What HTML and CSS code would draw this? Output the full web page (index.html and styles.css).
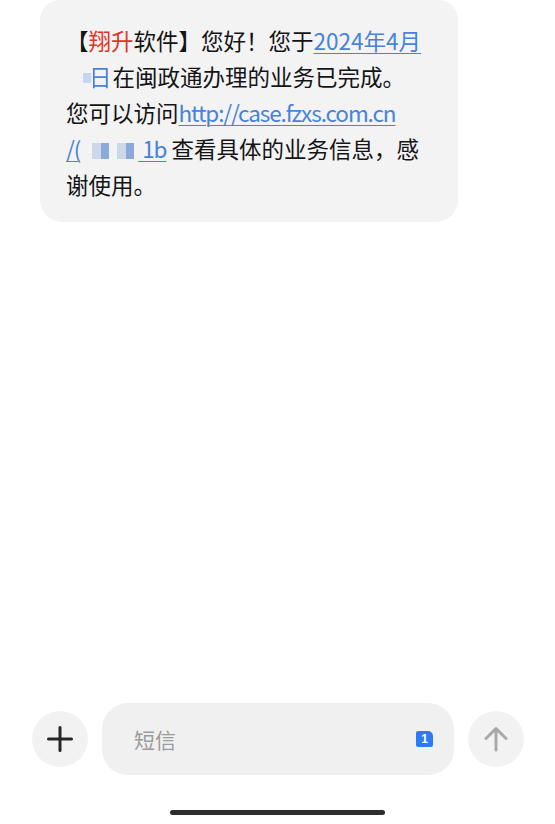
FILE: index.html
```html
<!DOCTYPE html>
<html lang="zh-CN">
<head>
  <meta charset="UTF-8" />
  <meta name="viewport" content="width=device-width, initial-scale=1.0"/>
  <title>短信</title>
  <link rel="stylesheet" href="styles.css">
</head>
<body>
  <div class="thread">
    <div class="bubble">
      <p class="msg">【<span class="brand">翔升</span>软件】您好！您于<a class="link" href="#">2024年4月</a><br><a class="link mosaic" href="#"><span class="blank"></span><span class="px px-a"></span><span class="blur">日</span></a>在闽政通办理的业务已完成。<br>您可以访问<a class="link latin" href="#">http://case.fzxs.com.cn</a><br><a class="link latin" href="#">/(<span class="px px-b first"></span><span class="px px-c"></span><span class="px px-b"></span><span class="px px-c last"></span> 1b</a> 查看具体的业务信息，感<br>谢使用。</p>
    </div>
  </div>

  <div class="composer">
    <div class="round-btn">
      <svg width="26" height="26" viewBox="0 0 26 26">
        <path d="M13 1.5v23M1.5 13h23" stroke="#262626" stroke-width="3" stroke-linecap="round" fill="none"/>
      </svg>
    </div>
    <div class="input-pill">
      <span class="placeholder">短信</span>
      <span class="sim">1</span>
    </div>
    <div class="round-btn">
      <svg width="24" height="26" viewBox="0 0 24 26">
        <path d="M12 24V3M2 12.5L12 2.5l10 10" stroke="#a9a9a9" stroke-width="3" stroke-linecap="round" stroke-linejoin="round" fill="none"/>
      </svg>
    </div>
  </div>

  <div class="home-bar"></div>
</body>
</html>
```

FILE: styles.css
```css
* {
  box-sizing: border-box;
}

body {
  margin: 0;
  height: 100vh;
  display: flex;
  flex-direction: column;
  background: #fff;
  font-family: "Noto Sans CJK SC", "Noto Sans", sans-serif;
  color: #141414;
  overflow: hidden;
}

.thread {
  flex: 1;
  padding: 0 0 0 40px;
}

.bubble {
  width: 418px;
  background: #f3f3f4;
  border-radius: 20px 20px 22px 22px;
  padding: 22px 20px 20px 26px;
}

.msg {
  margin: 0;
  font-size: 22.5px;
  line-height: 36px;
  white-space: nowrap;
}

.brand {
  color: #e2332b;
}

.link {
  color: #4683d9;
  text-decoration: underline;
  text-decoration-thickness: 1px;
  text-underline-offset: 3px;
}

.latin {
  letter-spacing: -1.1px;
}

.mosaic {
  text-decoration: none;
}

.blank {
  display: inline-block;
  width: 17px;
}

.px {
  display: inline-block;
  height: 16px;
  vertical-align: -1px;
}

.px-a {
  width: 8px;
  height: 10px;
  margin-right: -2px;
  background: #c4d6f1;
  vertical-align: 3px;
}

.px-b {
  width: 9px;
  margin-left: 8px;
  background: #cdd7ea;
}

.px-b.first {
  margin-left: 12px;
}

.px-c {
  width: 8px;
  background: #8da9da;
}

.px-c.last {
  margin-right: 4px;
}

.blur {
  display: inline-block;
  filter: blur(0.6px);
  margin-right: 1px;
}

.composer {
  display: flex;
  align-items: center;
  gap: 14px;
  padding: 0 31px 0 32px;
}

.round-btn {
  width: 56px;
  height: 56px;
  flex: none;
  border-radius: 50%;
  background: #f2f2f2;
  display: flex;
  align-items: center;
  justify-content: center;
}

.input-pill {
  flex: 1;
  height: 72px;
  border-radius: 26px;
  background: #f0f0f0;
  display: flex;
  align-items: center;
  justify-content: space-between;
  padding: 0 21px 0 32px;
}

.placeholder {
  font-size: 21px;
  color: #9b9b9b;
}

.sim {
  width: 17px;
  height: 16px;
  background: #2b7cf2;
  color: #fff;
  font-family: "Liberation Sans", sans-serif;
  font-size: 12px;
  font-weight: bold;
  line-height: 16px;
  text-align: center;
  border-radius: 2px 5px 2px 2px;
}

.home-bar {
  align-self: center;
  width: 215px;
  height: 5px;
  border-radius: 3px;
  background: #2e2e2e;
  margin: 35px 0 9px;
}
```
